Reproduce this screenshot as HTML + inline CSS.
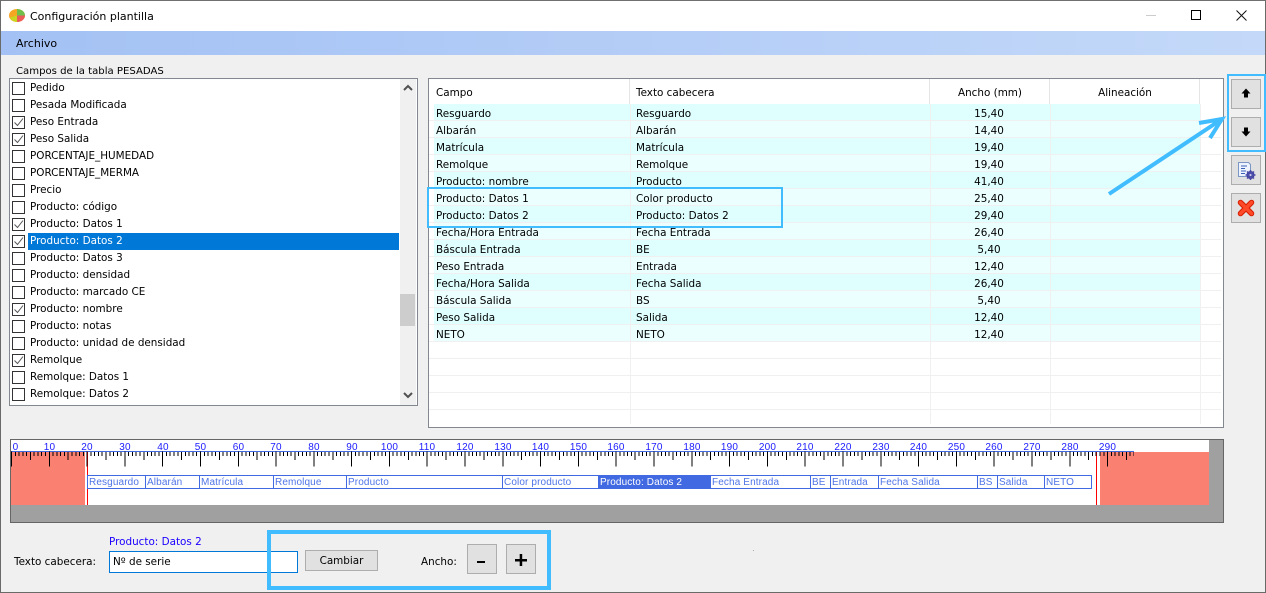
<!DOCTYPE html>
<html><head><meta charset="utf-8"><style>
*{box-sizing:border-box}
html,body{margin:0;padding:0}
body{width:1266px;height:593px;position:relative;overflow:hidden;background:#f0f0f0;font-family:"DejaVu Sans","Liberation Sans",sans-serif;font-size:10.4px;color:#000}
.a{position:absolute;white-space:nowrap}
.t{position:absolute;white-space:nowrap;line-height:17px;height:17px}
.btn{position:absolute;background:#e1e1e1;border:1px solid #adadad}
.row{position:absolute;left:1px;width:370px;height:17px;line-height:17px}
.cb{position:absolute;width:13px;height:13px;background:#fff;border:1px solid #333;left:1px;top:3px}
.cb svg{position:absolute;left:0;top:0}
.row span{position:absolute;left:19px;top:1px}
.gr{position:absolute;left:1px;width:771px;height:17px;border-bottom:1px solid #f0f0f0;line-height:16px}
.gr i{position:absolute;top:0;height:17px;width:1px;background:#f0f0f0}
.gr b{position:absolute;left:5px;top:0;height:16px;width:766px}
.gr.o b{background:#dfffff}.gr.e b{background:#ecffff}
.gr span{position:absolute;top:2px;font-style:normal}
.s1{left:7px}.s2{left:207px}.s3{left:530px;width:60px;text-align:center}
.cell{position:absolute;top:475px;height:14px;border:1px solid #4169e1;padding-left:1px;font:10px/13px "Liberation Sans",sans-serif;letter-spacing:.12px;color:#4f74e6;background:#fff;overflow:hidden;white-space:nowrap}
</style></head><body>

<!-- title bar -->
<div class="a" style="left:0;top:0;width:1266px;height:31px;background:#fff"></div>
<div class="a" style="left:0;top:0;width:1266px;height:1px;background:#707070"></div>
<svg class="a" style="left:9px;top:8px" width="17" height="15" viewBox="0 0 17 15"><ellipse cx="8" cy="7.500" rx="8" ry="6.500" fill="#f5a623"/><path d="M8 1a8 6.500 0 0 1 8 6.500H8z" fill="#6fc04a"/><path d="M8 7.500h8a8 6.500 0 0 1-8 6.500z" fill="#ec5a5a"/><path d="M1 9.500A8 6.500 0 0 0 8 14V7.500z" fill="#c8d820"/></svg>
<div class="a" style="left:30px;top:9px;line-height:16px;font-size:11px">Configuración plantilla</div>
<div class="a" style="left:1146px;top:15px;width:10px;height:1px;background:#ccc"></div>
<div class="a" style="left:1191px;top:10px;width:10px;height:10px;border:1px solid #000"></div>
<svg class="a" style="left:1236px;top:10px" width="11" height="11"><path d="M.5.500l10 10M10.500.500l-10 10" stroke="#111" fill="none"/></svg>

<!-- menu -->
<div class="a" style="left:1px;top:31px;width:1265px;height:24px;background:linear-gradient(90deg,#a3c1f4,#c4d9f9)"></div>
<div class="a" style="left:16px;top:36px;line-height:16px;font-size:11px">Archivo</div>
<div class="a" style="left:0;top:0;width:1px;height:593px;background:#6a6a6a"></div>
<div class="a" style="left:0;top:592px;width:1266px;height:1px;background:#6a6a6a"></div>
<div class="a" style="left:1265px;top:0;width:1px;height:593px;background:#6a6a6a"></div>

<div class="a" style="left:16px;top:65px;line-height:14px;font-size:10.1px">Campos de la tabla PESADAS</div>

<!-- list -->
<div class="a" style="left:9px;top:78px;width:409px;height:328px;background:#fff;border:1px solid #828790">
 <div class="a" style="left:18px;top:154px;width:371px;height:17px;background:#0078d7"></div>
 <div class="row" style="top:0"><div class="cb"></div><span>Pedido</span></div>
 <div class="row" style="top:17px"><div class="cb"></div><span>Pesada Modificada</span></div>
 <div class="row" style="top:34px"><div class="cb"><svg width="11" height="11"><path d="M1.500 5.500l3 3 5.500-7" stroke="#555" fill="none"/></svg></div><span>Peso Entrada</span></div>
 <div class="row" style="top:51px"><div class="cb"><svg width="11" height="11"><path d="M1.500 5.500l3 3 5.500-7" stroke="#555" fill="none"/></svg></div><span>Peso Salida</span></div>
 <div class="row" style="top:68px"><div class="cb"></div><span>PORCENTAJE_HUMEDAD</span></div>
 <div class="row" style="top:85px"><div class="cb"></div><span>PORCENTAJE_MERMA</span></div>
 <div class="row" style="top:102px"><div class="cb"></div><span>Precio</span></div>
 <div class="row" style="top:119px"><div class="cb"></div><span>Producto: código</span></div>
 <div class="row" style="top:136px"><div class="cb"><svg width="11" height="11"><path d="M1.500 5.500l3 3 5.500-7" stroke="#555" fill="none"/></svg></div><span>Producto: Datos 1</span></div>
 <div class="row" style="top:153px"><div class="cb"><svg width="11" height="11"><path d="M1.500 5.500l3 3 5.500-7" stroke="#555" fill="none"/></svg></div><span style="color:#fff">Producto: Datos 2</span></div>
 <div class="row" style="top:170px"><div class="cb"></div><span>Producto: Datos 3</span></div>
 <div class="row" style="top:187px"><div class="cb"></div><span>Producto: densidad</span></div>
 <div class="row" style="top:204px"><div class="cb"></div><span>Producto: marcado CE</span></div>
 <div class="row" style="top:221px"><div class="cb"><svg width="11" height="11"><path d="M1.500 5.500l3 3 5.500-7" stroke="#555" fill="none"/></svg></div><span>Producto: nombre</span></div>
 <div class="row" style="top:238px"><div class="cb"></div><span>Producto: notas</span></div>
 <div class="row" style="top:255px"><div class="cb"></div><span>Producto: unidad de densidad</span></div>
 <div class="row" style="top:272px"><div class="cb"><svg width="11" height="11"><path d="M1.500 5.500l3 3 5.500-7" stroke="#555" fill="none"/></svg></div><span>Remolque</span></div>
 <div class="row" style="top:289px"><div class="cb"></div><span>Remolque: Datos 1</span></div>
 <div class="row" style="top:306px"><div class="cb"></div><span>Remolque: Datos 2</span></div>
 <div class="a" style="left:390px;top:0;width:16px;height:326px;background:#f0f0f0"></div>
 <div class="a" style="left:390px;top:215px;width:15px;height:32px;background:#cdcdcd"></div>
 <svg class="a" style="left:392px;top:5px" width="12" height="8"><path d="M2 6l4-4 4 4" stroke="#505050" stroke-width="2" fill="none"/></svg>
 <svg class="a" style="left:392px;top:312px" width="12" height="8"><path d="M2 2l4 4 4-4" stroke="#505050" stroke-width="2" fill="none"/></svg>
</div>

<!-- grid -->
<div class="a" style="left:428px;top:78px;width:796px;height:350px;background:#fff;border:1px solid #828790">
 <div class="a" style="left:200px;top:0;width:1px;height:25px;background:#e5e5e5"></div>
 <div class="a" style="left:500px;top:0;width:1px;height:25px;background:#e5e5e5"></div>
 <div class="a" style="left:620px;top:0;width:1px;height:25px;background:#e5e5e5"></div>
 <div class="a" style="left:770px;top:0;width:1px;height:25px;background:#e5e5e5"></div>
 <div class="a" style="left:7px;top:6px;line-height:16px">Campo</div>
 <div class="a" style="left:207px;top:6px;line-height:16px">Texto cabecera</div>
 <div class="a" style="left:501px;top:6px;width:120px;text-align:center;line-height:16px">Ancho (mm)</div>
 <div class="a" style="left:621px;top:6px;width:150px;text-align:center;line-height:16px">Alineación</div>

 <div style="position:absolute;left:0;top:25px;width:796px;height:320px;overflow:hidden">
 <div class="gr o" style="top:0;left:0;width:792px"><b></b><i style="left:201px"></i><i style="left:501px"></i><i style="left:621px"></i><i style="left:771px"></i><span class="s1">Resguardo</span><span class="s2">Resguardo</span><span class="s3">15,40</span></div>
 <div class="gr e" style="top:17px;left:0;width:792px"><b></b><i style="left:201px"></i><i style="left:501px"></i><i style="left:621px"></i><i style="left:771px"></i><span class="s1">Albarán</span><span class="s2">Albarán</span><span class="s3">14,40</span></div>
 <div class="gr o" style="top:34px;left:0;width:792px"><b></b><i style="left:201px"></i><i style="left:501px"></i><i style="left:621px"></i><i style="left:771px"></i><span class="s1">Matrícula</span><span class="s2">Matrícula</span><span class="s3">19,40</span></div>
 <div class="gr e" style="top:51px;left:0;width:792px"><b></b><i style="left:201px"></i><i style="left:501px"></i><i style="left:621px"></i><i style="left:771px"></i><span class="s1">Remolque</span><span class="s2">Remolque</span><span class="s3">19,40</span></div>
 <div class="gr o" style="top:68px;left:0;width:792px"><b></b><i style="left:201px"></i><i style="left:501px"></i><i style="left:621px"></i><i style="left:771px"></i><span class="s1">Producto: nombre</span><span class="s2">Producto</span><span class="s3">41,40</span></div>
 <div class="gr e" style="top:85px;left:0;width:792px"><b></b><i style="left:201px"></i><i style="left:501px"></i><i style="left:621px"></i><i style="left:771px"></i><span class="s1">Producto: Datos 1</span><span class="s2">Color producto</span><span class="s3">25,40</span></div>
 <div class="gr o" style="top:102px;left:0;width:792px"><b></b><i style="left:201px"></i><i style="left:501px"></i><i style="left:621px"></i><i style="left:771px"></i><span class="s1">Producto: Datos 2</span><span class="s2">Producto: Datos 2</span><span class="s3">29,40</span></div>
 <div class="gr e" style="top:119px;left:0;width:792px"><b></b><i style="left:201px"></i><i style="left:501px"></i><i style="left:621px"></i><i style="left:771px"></i><span class="s1">Fecha/Hora Entrada</span><span class="s2">Fecha Entrada</span><span class="s3">26,40</span></div>
 <div class="gr o" style="top:136px;left:0;width:792px"><b></b><i style="left:201px"></i><i style="left:501px"></i><i style="left:621px"></i><i style="left:771px"></i><span class="s1">Báscula Entrada</span><span class="s2">BE</span><span class="s3">5,40</span></div>
 <div class="gr e" style="top:153px;left:0;width:792px"><b></b><i style="left:201px"></i><i style="left:501px"></i><i style="left:621px"></i><i style="left:771px"></i><span class="s1">Peso Entrada</span><span class="s2">Entrada</span><span class="s3">12,40</span></div>
 <div class="gr o" style="top:170px;left:0;width:792px"><b></b><i style="left:201px"></i><i style="left:501px"></i><i style="left:621px"></i><i style="left:771px"></i><span class="s1">Fecha/Hora Salida</span><span class="s2">Fecha Salida</span><span class="s3">26,40</span></div>
 <div class="gr e" style="top:187px;left:0;width:792px"><b></b><i style="left:201px"></i><i style="left:501px"></i><i style="left:621px"></i><i style="left:771px"></i><span class="s1">Báscula Salida</span><span class="s2">BS</span><span class="s3">5,40</span></div>
 <div class="gr o" style="top:204px;left:0;width:792px"><b></b><i style="left:201px"></i><i style="left:501px"></i><i style="left:621px"></i><i style="left:771px"></i><span class="s1">Peso Salida</span><span class="s2">Salida</span><span class="s3">12,40</span></div>
 <div class="gr e" style="top:221px;left:0;width:792px"><b></b><i style="left:201px"></i><i style="left:501px"></i><i style="left:621px"></i><i style="left:771px"></i><span class="s1">NETO</span><span class="s2">NETO</span><span class="s3">12,40</span></div>
 <div class="gr" style="top:238px;left:0;width:792px"><i style="left:201px"></i><i style="left:501px"></i><i style="left:621px"></i><i style="left:771px"></i></div>
 <div class="gr" style="top:255px;left:0;width:792px"><i style="left:201px"></i><i style="left:501px"></i><i style="left:621px"></i><i style="left:771px"></i></div>
 <div class="gr" style="top:272px;left:0;width:792px"><i style="left:201px"></i><i style="left:501px"></i><i style="left:621px"></i><i style="left:771px"></i></div>
 <div class="gr" style="top:289px;left:0;width:792px"><i style="left:201px"></i><i style="left:501px"></i><i style="left:621px"></i><i style="left:771px"></i></div>
 <div class="gr" style="top:306px;left:0;width:792px"><i style="left:201px"></i><i style="left:501px"></i><i style="left:621px"></i><i style="left:771px"></i></div>
 </div>
</div>

<!-- side buttons -->
<div class="btn" style="left:1231px;top:79px;width:30px;height:30px"></div>
<div class="btn" style="left:1231px;top:117px;width:30px;height:30px"></div>
<div class="btn" style="left:1231px;top:155px;width:30px;height:30px"></div>
<div class="btn" style="left:1231px;top:193px;width:30px;height:30px"></div>
<svg class="a" style="left:1231px;top:79px" width="30" height="30"><path d="M15 9.500l4.500 5H17v4h-4v-4h-2.500z" fill="#000"/></svg>
<svg class="a" style="left:1231px;top:117px" width="30" height="30"><path d="M15 19.500l4.500-5H17v-4h-4v4h-2.500z" fill="#000"/></svg>
<svg class="a" style="left:1231px;top:155px" width="30" height="30">
 <path d="M7.500 7.500h10l2 2v12h-12z" fill="#eef4ff" stroke="#7b96c4"/>
 <path d="M10 11h6M10 13.500h4M10 16h5M10 18.500h4" stroke="#3a62b8"/>
 <circle cx="19.500" cy="20" r="3.500" fill="#5a5ab8" stroke="#3d3d96"/>
 <path d="M19.500 15v10M14.500 20h10M16 16.500l7 7M23 16.500l-7 7" stroke="#4a4aa8" stroke-width="1.500"/>
 <circle cx="19.500" cy="20" r="1.100" fill="#c8c8e8"/>
</svg>
<svg class="a" style="left:1231px;top:193px" width="30" height="30">
 <path d="M9.500 9.500l11 11M20.500 9.500l-11 11" stroke="#d61c00" stroke-width="5.500" stroke-linecap="round"/>
 <path d="M9.500 9.500l11 11M20.500 9.500l-11 11" stroke="#ff4a2a" stroke-width="3.500" stroke-linecap="round"/>
</svg>

<!-- ruler -->
<div class="a" style="left:10px;top:439px;width:1214px;height:84px;background:#a0a0a0;border:1px solid #666"></div>
<div class="a" style="left:11px;top:440px;width:1198px;height:65px;background:#fff"></div>
<div class="a" style="left:11px;top:452px;width:74px;height:53px;background:#fa8072"></div>
<div class="a" style="left:1100px;top:452px;width:109px;height:53px;background:#fa8072"></div>
<div class="a" style="left:87px;top:452px;width:1px;height:53px;background:#f00"></div>
<div class="a" style="left:1096px;top:452px;width:1px;height:53px;background:#f00"></div>
<div class="a" style="left:11px;top:451px;width:1123px;height:1px;background:#4169e1"></div>
<svg class="a" style="left:0;top:439px" width="1266" height="40" shape-rendering="crispEdges">
 <g transform="translate(0,-439)" stroke="#000" fill="none">
  <line x1="11" x2="1134" y1="454" y2="454" stroke-width="4" stroke-dasharray="1 2.7795"/>
  <line x1="29.900" x2="1134" y1="456" y2="456" stroke-width="8" stroke-dasharray="1 36.795"/>
  <line x1="11" x2="1134" y1="459" y2="459" stroke-width="15" stroke-dasharray="1 36.795"/>
 </g>
 <g transform="translate(0,-439)" font-family="Liberation Sans, sans-serif" font-size="10" fill="#1c1cff" text-anchor="middle" letter-spacing=".2" shape-rendering="auto">
  <text x="15.500" y="450">0</text><text x="49.500" y="450">10</text><text x="87" y="450">20</text><text x="125" y="450">30</text><text x="163" y="450">40</text><text x="200.500" y="450">50</text><text x="238.500" y="450">60</text><text x="276" y="450">70</text><text x="314" y="450">80</text><text x="352" y="450">90</text><text x="389.500" y="450">100</text><text x="427" y="450">110</text><text x="465" y="450">120</text><text x="503" y="450">130</text><text x="540.500" y="450">140</text><text x="578.500" y="450">150</text><text x="616" y="450">160</text><text x="654" y="450">170</text><text x="692" y="450">180</text><text x="729.500" y="450">190</text><text x="767.500" y="450">200</text><text x="805" y="450">210</text><text x="843" y="450">220</text><text x="881" y="450">230</text><text x="918.500" y="450">240</text><text x="956.500" y="450">250</text><text x="994" y="450">260</text><text x="1032" y="450">270</text><text x="1070" y="450">280</text><text x="1107.500" y="450">290</text>
 </g>
</svg>
<div class="cell" style="left:87px;width:59px">Resguardo</div>
<div class="cell" style="left:145px;width:55px">Albarán</div>
<div class="cell" style="left:199px;width:75px">Matrícula</div>
<div class="cell" style="left:273px;width:74px">Remolque</div>
<div class="cell" style="left:346px;width:157px">Producto</div>
<div class="cell" style="left:502px;width:97px">Color producto</div>
<div class="cell" style="left:598px;width:113px;background:#4169e1;color:#fff">Producto: Datos 2</div>
<div class="cell" style="left:710px;width:101px">Fecha Entrada</div>
<div class="cell" style="left:810px;width:21px">BE</div>
<div class="cell" style="left:830px;width:49px">Entrada</div>
<div class="cell" style="left:878px;width:100px">Fecha Salida</div>
<div class="cell" style="left:977px;width:21px">BS</div>
<div class="cell" style="left:997px;width:48px">Salida</div>
<div class="cell" style="left:1044px;width:48px">NETO</div>

<!-- bottom -->
<div class="a" style="left:109px;top:534px;line-height:16px;color:#1a00ff">Producto: Datos 2</div>
<div class="a" style="left:14px;top:553px;line-height:18px">Texto cabecera:</div>
<div class="a" style="left:109px;top:551px;width:189px;height:22px;background:#fff;border:1px solid #0078d7;padding-left:3px;line-height:20px">Nº de serie</div>
<div class="btn" style="left:305px;top:550px;width:73px;height:21px;text-align:center;line-height:21px">Cambiar</div>
<div class="a" style="left:421px;top:553px;line-height:18px">Ancho:</div>
<div class="btn" style="left:467px;top:544px;width:30px;height:30px"></div>
<div class="btn" style="left:506px;top:544px;width:30px;height:30px"></div>
<div class="a" style="left:477px;top:561px;width:8px;height:2px;background:#000"></div>
<svg class="a" style="left:515px;top:554px" width="12" height="12"><path d="M0 5h12v2.500H0zM4.700 0h2.500v12H4.700z" fill="#000"/></svg>
<div class="a" style="left:753px;top:550px;width:1px;height:1px;background:#aaa"></div>

<!-- highlights -->
<div class="a" style="left:427px;top:187px;width:356px;height:41px;border:2px solid #41bdff"></div>
<div class="a" style="left:1227px;top:74px;width:39px;height:78px;border:2px solid #41bdff"></div>
<div class="a" style="left:267px;top:530px;width:284px;height:60px;border:4px solid #41bdff"></div>
<svg class="a" style="left:1100px;top:110px" width="130" height="90"><path d="M9 84L122 9M99 13L122 9L110 28" stroke="#41bdff" stroke-width="4" fill="none"/></svg>
</body></html>
